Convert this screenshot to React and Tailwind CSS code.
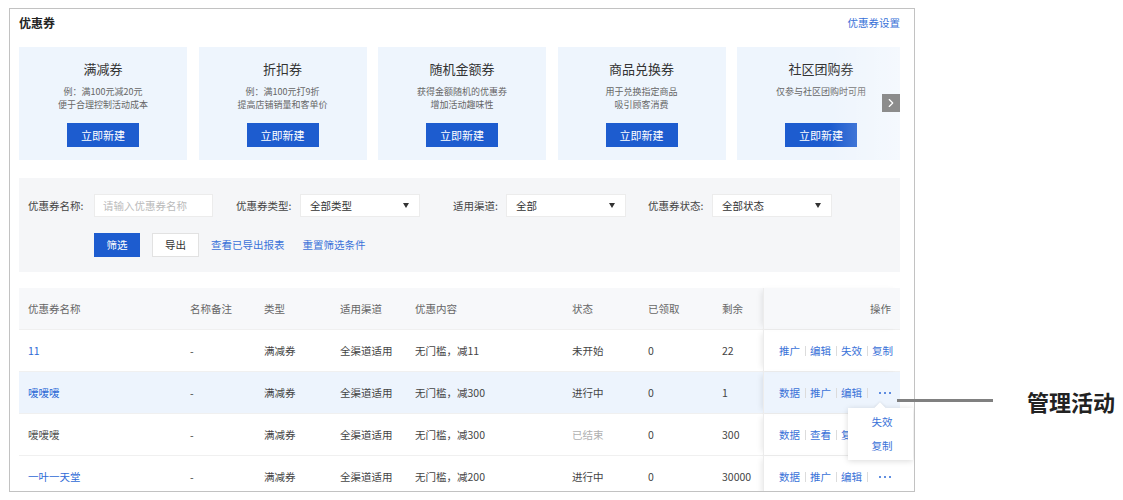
import { ChevronRight } from 'lucide-react'

const cards = [
  { title: '满减券', lines: ['例：满100元减20元', '便于合理控制活动成本'] },
  { title: '折扣券', lines: ['例：满100元打9折', '提高店铺销量和客单价'] },
  { title: '随机金额券', lines: ['获得金额随机的优惠券', '增加活动趣味性'] },
  { title: '商品兑换券', lines: ['用于兑换指定商品', '吸引顾客消费'] },
  { title: '社区团购券', lines: ['仅参与社区团购时可用'] },
]

const rows = [
  { name: '11', link: true, content: '无门槛，减11', status: '未开始', got: '0', left: '22', actions: ['推广', '编辑', '失效', '复制'] },
  { name: '嗳嗳嗳', link: true, content: '无门槛，减300', status: '进行中', got: '0', left: '1', actions: ['数据', '推广', '编辑', 'more'], active: true },
  { name: '嗳嗳嗳', link: false, content: '无门槛，减300', status: '已结束', got: '0', left: '300', actions: ['数据', '查看', '复制'], ended: true },
  { name: '一叶一天堂', link: true, content: '无门槛，减200', status: '进行中', got: '0', left: '30000', actions: ['数据', '推广', '编辑', 'more'] },
]

const cols = ['w-[162px]', 'w-[74px]', 'w-[76px]', 'w-[75px]', 'w-[157px]', 'w-[76px]', 'w-[74px]', 'w-[50px]']

function Select({ value, width = 'w-[120px]' }) {
  return (
    <div className={`${width} h-[23px] bg-white border border-[#ececec] flex items-center justify-between pl-[9px] pr-[10px] text-[#333]`}>
      <span>{value}</span>
      <span className="w-0 h-0 border-l-[3.5px] border-r-[3.5px] border-t-[5px] border-l-transparent border-r-transparent border-t-[#333]" />
    </div>
  )
}

function MoreDots() {
  return (
    <span className="ml-[7px] flex items-center gap-[3px]">
      <span className="w-[2px] h-[2px] rounded-full bg-[#2e6ad6]" />
      <span className="w-[2px] h-[2px] rounded-full bg-[#2e6ad6]" />
      <span className="w-[2px] h-[2px] rounded-full bg-[#2e6ad6]" />
    </span>
  )
}

function Actions({ items }) {
  return (
    <div className="flex items-center whitespace-nowrap">
      {items.map((a, i) => (
        <div key={i} className="flex items-center shrink-0">
          {i > 0 && <span className="w-px h-[10px] bg-[#dcdcdc] mx-[4.5px]" />}
          {a === 'more' ? <MoreDots /> : <span className="text-[#3a72d8]">{a}</span>}
        </div>
      ))}
    </div>
  )
}

export default function App() {
  return (
    <div
      className="relative w-[1123px] h-[500px] bg-white text-[10.5px] text-[#444] overflow-hidden"
      style={{ fontFamily: '"Noto Sans CJK SC", "Noto Sans", sans-serif' }}
    >
      <div className="ml-[9px] mt-[8px] w-[906px] h-[484px] border border-[#c2c2c2] overflow-hidden relative">
        <div className="pl-[9px] pr-[14px]">
          {/* header */}
          <div className="flex items-center justify-between h-[28px]">
            <span className="text-[12px] font-bold text-[#222]">优惠券</span>
            <span className="text-[#3a72d8]">优惠券设置</span>
          </div>

          {/* cards */}
          <div className="relative mt-[10px] flex gap-[11.5px] overflow-hidden">
            {cards.map((c) => (
              <div key={c.title} className="shrink-0 w-[168px] h-[113px] bg-[#eef5fd] flex flex-col items-center pt-[14px]">
                <div className="text-[13px] leading-[16px] text-[#333]">{c.title}</div>
                <div className="mt-[8px] h-[26px] text-[9px] leading-[13px] text-[#666] text-center">
                  {c.lines.map((l) => (
                    <div key={l}>{l}</div>
                  ))}
                </div>
                <button className="mt-[12px] w-[72px] h-[24px] bg-[#1d5ccf] text-white text-[11px]">立即新建</button>
              </div>
            ))}
            <div className="absolute right-0 top-0 bottom-0 w-[70px] bg-gradient-to-r from-transparent to-white/40" />
            <div className="absolute right-0 top-[47px] w-[18px] h-[18px] bg-[#8c8c8c] flex items-center justify-center">
              <ChevronRight size={14} color="#fff" strokeWidth={2} />
            </div>
          </div>

          {/* filters */}
          <div className="mt-[18px] h-[94px] bg-[#f5f6f8] pt-[16px] pl-[9px]">
            <div className="flex items-center">
              <span className="w-[66px] text-[#444]">优惠券名称:</span>
              <div className="w-[119px] h-[23px] bg-white border border-[#ececec] flex items-center pl-[8px] text-[#bbb]">请输入优惠券名称</div>
              <span className="ml-[23px] w-[64px] text-[#444]">优惠券类型:</span>
              <Select value="全部类型" />
              <span className="ml-[33px] w-[53px] text-[#444]">适用渠道:</span>
              <Select value="全部" />
              <span className="ml-[22px] w-[64px] text-[#444]">优惠券状态:</span>
              <Select value="全部状态" />
            </div>
            <div className="flex items-center mt-[16px] ml-[66px]">
              <button className="w-[46px] h-[24px] bg-[#1d5ccf] text-white">筛选</button>
              <button className="ml-[12px] w-[47px] h-[24px] bg-white border border-[#e2e2e2] text-[#333]">导出</button>
              <span className="ml-[12px] text-[#3a72d8]">查看已导出报表</span>
              <span className="ml-[18px] text-[#3a72d8]">重置筛选条件</span>
            </div>
          </div>

          {/* table */}
          <div className="mt-[16px] relative">
            <div className="flex h-[41px] items-center bg-[#f7f8fa] text-[#666]">
              {['优惠券名称', '名称备注', '类型', '适用渠道', '优惠内容', '状态', '已领取', '剩余'].map((h, i) => (
                <div key={h} className={`${cols[i]} shrink-0 pl-[9px]`}>{h}</div>
              ))}
              <div className="flex-1 h-full flex items-center justify-end pr-[9px] border-l border-[#ececec] shadow-[-4px_0_6px_-3px_rgba(0,0,0,0.1)]">操作</div>
            </div>
            {rows.map((r, ri) => (
              <div key={ri} className={`flex h-[42px] items-center border-t border-[#f0f0f0] ${r.active ? 'bg-[#edf4fd]' : 'bg-white'}`}>
                <div className={`${cols[0]} shrink-0 pl-[9px] ${r.link ? 'text-[#2e6ad6]' : 'text-[#555]'}`}>{r.name}</div>
                <div className={`${cols[1]} shrink-0 pl-[9px]`}>-</div>
                <div className={`${cols[2]} shrink-0 pl-[9px]`}>满减券</div>
                <div className={`${cols[3]} shrink-0 pl-[9px]`}>全渠道适用</div>
                <div className={`${cols[4]} shrink-0 pl-[9px]`}>{r.content}</div>
                <div className={`${cols[5]} shrink-0 pl-[9px] ${r.ended ? 'text-[#b0b0b0]' : ''}`}>{r.status}</div>
                <div className={`${cols[6]} shrink-0 pl-[9px]`}>{r.got}</div>
                <div className={`${cols[7]} shrink-0 pl-[9px]`}>{r.left}</div>
                <div className="flex-1 min-w-0 h-full flex items-center pl-[15px] border-l border-[#ececec] shadow-[-4px_0_6px_-3px_rgba(0,0,0,0.1)]">
                  <Actions items={r.actions} />
                </div>
              </div>
            ))}
          </div>
        </div>

        {/* more-actions dropdown */}
        <div className="absolute left-[838px] top-[399px] w-[65px] h-[52px] bg-white shadow-[0_1px_6px_rgba(0,0,0,0.15)] flex flex-col items-center justify-center gap-[8px] pl-[3px] text-[#3a72d8]">
          <span className="absolute -top-[4px] left-[28px] w-[8px] h-[8px] bg-white rotate-45 shadow-[-1px_-1px_2px_rgba(0,0,0,0.06)]" />
          <span className="relative">失效</span>
          <span className="relative">复制</span>
        </div>
      </div>

      {/* annotation */}
      <div className="absolute left-[897px] top-[399px] w-[96px] h-[3px] bg-[#808080]" />
      <div className="absolute left-[1027px] top-[387px] text-[22px] leading-[28px] font-bold text-[#222]">管理活动</div>
    </div>
  )
}
